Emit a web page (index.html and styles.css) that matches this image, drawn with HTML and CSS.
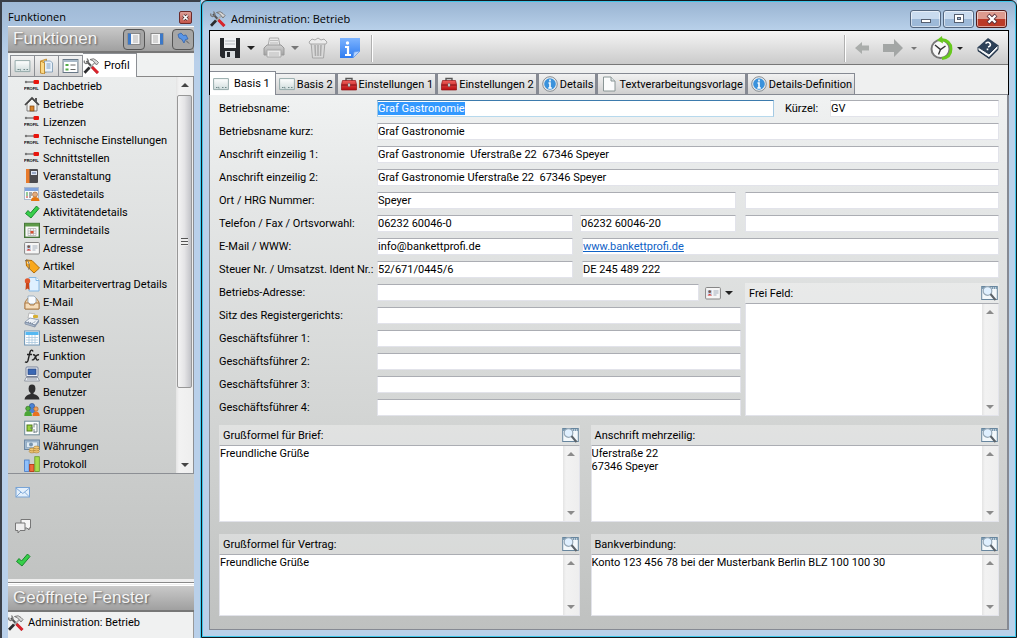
FILE: index.html
```html
<!DOCTYPE html>
<html lang="de">
<head>
<meta charset="utf-8">
<title>Administration: Betrieb</title>
<link rel="stylesheet" href="styles.css">
</head>
<body>
<svg class="defs" aria-hidden="true">
  <defs>
    <linearGradient id="gBlue" x1="0" y1="0" x2="0" y2="1"><stop offset="0" stop-color="#7db4ff"/><stop offset="1" stop-color="#2f7cf0"/></linearGradient>
    <linearGradient id="gRed" x1="0" y1="0" x2="0" y2="1"><stop offset="0" stop-color="#f0605c"/><stop offset="1" stop-color="#b80d10"/></linearGradient>
    <linearGradient id="gGray" x1="0" y1="0" x2="0" y2="1"><stop offset="0" stop-color="#d2d2d2"/><stop offset="1" stop-color="#a2a2a2"/></linearGradient>
    <linearGradient id="gSheet" x1="0" y1="0" x2="0" y2="1"><stop offset="0" stop-color="#ffffff"/><stop offset="1" stop-color="#cfdcdc"/></linearGradient>
  </defs>
  <symbol id="i-house" viewBox="0 0 16 16"><path d="M3 8v7h10V8L8 3z" fill="#f3f3f1" stroke="#666" stroke-width=".8"/><path d="M1 9l7-7 7 7" fill="none" stroke="#444" stroke-width="1.7"/><rect x="11" y="2" width="2" height="4" fill="#555"/><rect x="6" y="10" width="4" height="5" fill="#d9842b" stroke="#7c4510" stroke-width=".7"/></symbol>
  <symbol id="i-binder" viewBox="0 0 16 16"><rect x="2" y="1" width="12" height="14" rx="1" fill="#4b4b4f"/><rect x="2" y="1" width="3.500" height="14" fill="#e87b2c"/><rect x="7" y="3" width="6" height="4" fill="#dfe6f3"/><path d="M8 5h4" stroke="#56709e"/></symbol>
  <symbol id="i-guest" viewBox="0 0 16 16"><rect x=".5" y="1.500" width="14" height="12" fill="#f7f9fb" stroke="#a9b7cc"/><rect x="1" y="2" width="13" height="3" fill="#7fa3dd"/><path d="M2 7h2M2 9h2" stroke="#379a32"/><path d="M2 11h2" stroke="#d02d20"/><path d="M5 7h3M5 9h3M5 11h2" stroke="#555"/><circle cx="11" cy="8.500" r="2.500" fill="#e3ab7e" stroke="#9b5c2a" stroke-width=".6"/><path d="M7 15q0-4 4-4t4.500 4z" fill="#e57511"/></symbol>
  <symbol id="i-check" viewBox="0 0 16 16"><path d="M1.500 9.500l2.500-3 2.500 2.500L12.500 2l2.500 2.500L7 14z" fill="#37cf4a" stroke="#128024" stroke-width=".9"/></symbol>
  <symbol id="i-cal" viewBox="0 0 16 16"><rect x=".7" y="1.500" width="14.600" height="13.800" fill="#fafafa" stroke="#47763a" stroke-width="1.400"/><rect x="1" y="1.500" width="14" height="3" fill="#5e9a48"/><path d="M4 6.500h8v7H4zM4 9h8M4 11.300h8M6.600 6.500v7M9.400 6.500v7" fill="none" stroke="#b3b3b3" stroke-width=".8"/><rect x="6.500" y="9" width="3" height="2.500" fill="#d95030"/></symbol>
  <symbol id="i-card" viewBox="0 0 16 16"><rect x=".6" y="2.500" width="14.800" height="11.500" rx="1" fill="#f6f6f6" stroke="#868686"/><rect x="2.500" y="5" width="4.500" height="5.500" fill="#c7d4e8"/><circle cx="4.700" cy="6.700" r="1.400" fill="#75564b"/><path d="M2.500 10.500q2-3 4.500 0z" fill="#da2f24"/><path d="M8.500 6h5M8.500 8h5M8.500 10h3" stroke="#a4afbd"/></symbol>
  <symbol id="i-tag" viewBox="0 0 16 16"><path d="M2 2l6 .5 7.500 7.500-5.500 5L2.500 8z" fill="#f9a81c" stroke="#b26c08"/><circle cx="4.500" cy="4.800" r="1.200" fill="#fff"/><path d="M1 3q3-3 4 3t-1 5" fill="none" stroke="#666" stroke-width=".9"/></symbol>
  <symbol id="i-contract" viewBox="0 0 16 16"><path d="M5 1.500h7l3 3V15H5z" fill="#dff0ff" stroke="#83b7e4"/><path d="M12 1.500v3h3" fill="#fff" stroke="#83b7e4"/><circle cx="3.500" cy="5" r="2.700" fill="#e0572a"/><path d="M2 7l-.5 7 2-1.500L5.500 14 5 7z" fill="#c94519"/></symbol>
  <symbol id="i-mail" viewBox="0 0 16 16"><path d="M1 8l3-4h8l3 4v7H1z" fill="#eecb9d" stroke="#a97742" stroke-width=".9"/><path d="M4 2h6l2 2v6H4z" fill="#f8fbff" stroke="#8da5b9" stroke-width=".8"/><path d="M1 9h4l1 2h4l1-2h4v6H1z" fill="#f5dcba" stroke="#a97742" stroke-width=".9"/></symbol>
  <symbol id="i-till" viewBox="0 0 16 16"><path d="M5 1l6 1-1 5-6-1z" fill="#fff" stroke="#999" stroke-width=".6"/><path d="M1 10l5-4 9 2-4 5z" fill="#edf1f6" stroke="#8795a9" stroke-width=".8"/><path d="M1 10v2l10 3v-2z" fill="#aebdd0" stroke="#74839a" stroke-width=".7"/><path d="M11 13l4-5v2l-4 5z" fill="#8493aa"/><path d="M4 10l5 1.500 3-3" fill="none" stroke="#637690" stroke-width="1" stroke-dasharray="1 1"/><rect x="9" y="3" width="5" height="3" rx="1" fill="#d6ae32"/></symbol>
  <symbol id="i-table" viewBox="0 0 16 16"><rect x=".6" y="1" width="14.800" height="14" fill="#fff" stroke="#6e95b5"/><rect x="1.500" y="2" width="13" height="3" fill="#55b8f2"/><path d="M2 7.500h12M2 10h12M2 12.500h12M5 5v9M8 5v9M11 5v9" stroke="#aac8de" stroke-width=".8"/></symbol>
  <symbol id="i-fx" viewBox="0 0 16 16"><path d="M9 3.500C8.500 1.500 6.500 1.800 6 4L4 12.500Q3.300 15 1 13.800M3 6.500h5M9 7q2-.8 2.500 2l.8 2q.6 2 2.500.3M15 7q-2-.8-3.500 2l-1 1.500Q9 12.600 8 11.500" fill="none" stroke="#222" stroke-width="1.400"/></symbol>
  <symbol id="i-pc" viewBox="0 0 16 16"><rect x="2" y="1" width="12" height="9.500" rx="1" fill="#eef0f5" stroke="#79839a"/><rect x="4" y="3" width="8" height="5.500" fill="#3b68b4" stroke="#27447d" stroke-width=".7"/><path d="M2 11.500h12l1.500 3.500H.5z" fill="#eceff4" stroke="#848b98" stroke-width=".8"/><path d="M3 13h10" stroke="#969daa"/></symbol>
  <symbol id="i-user" viewBox="0 0 16 16"><ellipse cx="8" cy="4.700" rx="3.400" ry="4.200" fill="#2f2f30"/><path d="M6.500 7h3v3q5.500 1 6 5.500H.5Q1 11 6.500 10z" fill="#2f2f30"/></symbol>
  <symbol id="i-group" viewBox="0 0 16 16"><circle cx="8" cy="4" r="2.600" fill="#4b83d5" stroke="#2a4e8c" stroke-width=".6"/><path d="M4.500 11q0-4.500 3.500-4.500T11.500 11z" fill="#4b83d5"/><circle cx="4" cy="6.500" r="2.300" fill="#55b23d" stroke="#29641b" stroke-width=".6"/><path d="M.3 14q0-5 3.700-5t4 5z" fill="#4ba636"/><circle cx="12" cy="7" r="2.200" fill="#efa05d" stroke="#a65a20" stroke-width=".6"/><path d="M8.500 14q0-4.500 3.500-4.500t3.700 4.500z" fill="#e9711f"/></symbol>
  <symbol id="i-rooms" viewBox="0 0 16 16"><rect x=".7" y="1.200" width="14.600" height="13.600" fill="#fcfdfd" stroke="#6e8a98"/><rect x="3" y="5" width="5" height="6" fill="#9ad03c" stroke="#4f7a1c"/><path d="M10 3.500v4M10 9v4M10 4h3v8h-3M6 8h3" fill="none" stroke="#66777e" stroke-width=".9"/></symbol>
  <symbol id="i-money" viewBox="0 0 16 16"><rect x=".6" y="2" width="14.800" height="9.500" fill="#a8bfd4" stroke="#67829e"/><rect x="2.500" y="4" width="11" height="5.500" fill="#dfeaf3" stroke="#7e9ab4" stroke-width=".6"/><circle cx="7" cy="6.600" r="2" fill="#7794ae"/><g fill="#f2c97a" stroke="#a87a28" stroke-width=".6"><ellipse cx="8" cy="13.500" rx="2.800" ry="1.400"/><ellipse cx="8" cy="11.500" rx="2.800" ry="1.400"/><ellipse cx="12.500" cy="13.500" rx="2.800" ry="1.400"/><ellipse cx="12.500" cy="11.500" rx="2.800" ry="1.400"/><ellipse cx="12.500" cy="9.500" rx="2.800" ry="1.400"/></g></symbol>
  <symbol id="i-bars" viewBox="0 0 16 16"><rect x=".6" y="4" width="4.500" height="11.500" fill="#8fc0fb" stroke="#4579c4" stroke-width=".8"/><rect x="5.700" y="8.500" width="4.300" height="7" fill="#ee6a3c" stroke="#b03008" stroke-width=".8"/><rect x="10.800" y=".7" width="4.500" height="14.800" fill="#a6dd4c" stroke="#639621" stroke-width=".8"/></symbol>
  <symbol id="i-sheet" viewBox="0 0 16 16"><path d="M.6 2.600h14.800v11H.6z" fill="url(#gSheet)" stroke="#96aaab"/><path d="M3 11.500h1.500M5 11.500q1-1 1 1M9 11.500h1.500M12 11.500h1.500" stroke="#6f8788" fill="none"/></symbol>
  <symbol id="i-folder" viewBox="0 0 16 16"><path d="M2 3l6-2v13l-6 1z" fill="#f1bc51" stroke="#ba842a" stroke-width=".8"/><path d="M6 3h6l2 2v9H6z" fill="#e8f1fa" stroke="#7795b0" stroke-width=".8"/><path d="M8 6h4M8 8h4M8 10h4" stroke="#7d9fc1"/><path d="M2 3l4 2v11l-4-1z" fill="#fbd986" stroke="#ba842a" stroke-width=".8"/></symbol>
  <symbol id="i-options" viewBox="0 0 16 16"><rect x=".6" y="1.500" width="14.800" height="13" fill="#fff" stroke="#687887"/><path d="M1 3h14" stroke="#a9bac9" stroke-width="2"/><path d="M3 6h3v2H3zM3 10.500h3v2H3z" fill="#57ad49"/><path d="M8 7h5M8 11.500h5" stroke="#666"/></symbol>
  <symbol id="i-tools" viewBox="0 0 16 16"><path d="M3 3l11 12" stroke="#555" stroke-width="2"/><path d="M1 2.500Q0 5 2.500 5.500L4 5l1-2L3.500.5" fill="none" stroke="#777" stroke-width="1.300"/><path d="M8.500 9l6 6" stroke="#d9232b" stroke-width="3"/><path d="M12 4l-7 7" stroke="#aaa" stroke-width="1.600"/><path d="M6 9.500L1 14.700" stroke="#2b2b2e" stroke-width="2.700"/><path d="M6.500 1.500q4-2 6.500 1l2 2-2 2.500-2-2.500q-1-2-4.500-3z" fill="#d7d7d7" stroke="#666" stroke-width=".8"/></symbol>
  <symbol id="i-toolbox" viewBox="0 0 16 16"><path d="M5 5V2.500h6V5" fill="none" stroke="#555" stroke-width="1.400"/><path d="M1.500 4.500h13l1 4V14H.5V8.500z" fill="url(#gRed)" stroke="#8f1417" stroke-width=".7"/><path d="M.5 9h15" stroke="#7c0c10"/><path d="M7 7.500h2v3H7z" fill="#e9e9e9" stroke="#666" stroke-width=".5"/></symbol>
  <symbol id="i-info" viewBox="0 0 16 16"><circle cx="8" cy="8" r="7.300" fill="#eee" stroke="#858c92"/><circle cx="8" cy="8" r="5.800" fill="#3a92dc"/><path d="M8 3.500v2M6.500 7H8v5M6.300 12h3.500" stroke="#fff" stroke-width="1.600" fill="none"/></symbol>
  <symbol id="i-page" viewBox="0 0 16 16"><path d="M2.500 1h7.500l4 4v10h-11.500z" fill="#fbfcfc" stroke="#8a9696"/><path d="M10 1v4h4" fill="#dfe5e5" stroke="#8a9696"/></symbol>
  <symbol id="i-search" viewBox="0 0 17 16"><rect x=".7" y="1.500" width="15.600" height="13" fill="#f3f8fb" stroke="#68869e"/><path d="M1 3h15" stroke="#7c9bb2" stroke-width="2"/><path d="M10 3h1M12 3h1M14 3h1" stroke="#fff"/><circle cx="6.500" cy="6" r="4.300" fill="#e0f0ff" stroke="#97a9b8" stroke-width="1.200"/><path d="M9.500 9l5 6" stroke="#5b6268" stroke-width="2"/></symbol>
  <symbol id="i-envelope" viewBox="0 0 16 16"><rect x="1" y="3.500" width="13.500" height="9.500" fill="#e4f0fc" stroke="#78a4d6"/><path d="M1 4l6.800 5.500L14.500 4M1 13l5-5M14.500 13l-5-5" fill="none" stroke="#78a4d6" stroke-width=".9"/></symbol>
  <symbol id="i-chat" viewBox="0 0 16 16"><path d="M6 1.500h9.500V10H14v2l-2-2H6z" fill="#f6f6f6" stroke="#777"/><path d="M.5 5h9.500v7.500H5l-2 2.500v-2.500H.5z" fill="#eee" stroke="#777"/></symbol>
</svg>

<div class="desktop">
  <aside class="dock">
    <div class="dock-title">
      <span>Funktionen</span>
      <button class="dock-close" aria-label="Bereich schließen"><svg viewBox="0 0 13 13"><path d="M4 4l5 5M9 4l-5 5" stroke="#3a2020" stroke-width="3.400"/><path d="M4 4l5 5M9 4l-5 5" stroke="#fff" stroke-width="1.800"/></svg></button>
    </div>
    <div class="band">
      <h2>Funktionen</h2>
      <div class="band-buttons">
        <button class="mini pressed" aria-label="Links andocken"><svg viewBox="0 0 16 16"><rect x="2" y="2.500" width="12" height="11" fill="#f5f5f5" stroke="#777" stroke-width=".8"/><rect x="2" y="2.500" width="3" height="11" fill="#3b78c8"/><path d="M7 5h5M7 7h5M7 9h5M7 11h5" stroke="#999" stroke-width=".7"/></svg></button>
        <button class="mini" aria-label="Rechts andocken"><svg viewBox="0 0 16 16"><rect x="2" y="2.500" width="12" height="11" fill="#f5f5f5" stroke="#777" stroke-width=".8"/><rect x="11" y="2.500" width="3" height="11" fill="#3b78c8"/><path d="M4 5h5M4 7h5M4 9h5M4 11h5" stroke="#999" stroke-width=".7"/></svg></button>
        <button class="mini pressed" aria-label="Anheften"><svg viewBox="0 0 16 16"><path d="M3 3.500l3-1.500 2.500 2.500 2.500-.5 2 4-2.500.5-1.500 3.500L6.500 8 4 7z" fill="#5a95e6" stroke="#2b5ca8" stroke-width=".7"/><path d="M11 9.500l3 3" stroke="#555"/></svg></button>
      </div>
    </div>
    <div class="dock-tabs" role="tablist">
      <button role="tab" aria-label="Übersicht"><svg class="ic wide"><use href="#i-sheet"/></svg></button>
      <button role="tab" aria-label="Ordner"><svg class="ic wide"><use href="#i-folder"/></svg></button>
      <button role="tab" aria-label="Optionen"><svg class="ic wide"><use href="#i-options"/></svg></button>
      <button role="tab" class="active" aria-selected="true"><svg class="ic wide"><use href="#i-tools"/></svg>Profil</button>
    </div>
    <div class="tree">
      <ul>
        <li><svg class="ic" viewBox="0 0 16 16"><path d="M1 4h10" stroke="#777" stroke-width="1.4"/><circle cx="2" cy="4" r="1.2" fill="#777"/><rect x="9.5" y="2" width="5.5" height="4" rx="1" fill="#e8150c"/><text class="logo-text" x="0" y="12">PROFIL</text></svg>Dachbetrieb</li>
        <li><svg class="ic"><use href="#i-house"/></svg>Betriebe</li>
        <li><svg class="ic" viewBox="0 0 16 16"><path d="M1 4h10" stroke="#777" stroke-width="1.4"/><circle cx="2" cy="4" r="1.2" fill="#777"/><rect x="9.5" y="2" width="5.5" height="4" rx="1" fill="#e8150c"/><text class="logo-text" x="0" y="12">PROFIL</text></svg>Lizenzen</li>
        <li><svg class="ic" viewBox="0 0 16 16"><path d="M1 4h10" stroke="#777" stroke-width="1.4"/><circle cx="2" cy="4" r="1.2" fill="#777"/><rect x="9.5" y="2" width="5.5" height="4" rx="1" fill="#e8150c"/><text class="logo-text" x="0" y="12">PROFIL</text></svg>Technische Einstellungen</li>
        <li><svg class="ic" viewBox="0 0 16 16"><path d="M1 4h10" stroke="#777" stroke-width="1.4"/><circle cx="2" cy="4" r="1.2" fill="#777"/><rect x="9.5" y="2" width="5.5" height="4" rx="1" fill="#e8150c"/><text class="logo-text" x="0" y="12">PROFIL</text></svg>Schnittstellen</li>
        <li><svg class="ic"><use href="#i-binder"/></svg>Veranstaltung</li>
        <li><svg class="ic"><use href="#i-guest"/></svg>Gästedetails</li>
        <li><svg class="ic"><use href="#i-check"/></svg>Aktivitätendetails</li>
        <li><svg class="ic"><use href="#i-cal"/></svg>Termindetails</li>
        <li><svg class="ic"><use href="#i-card"/></svg>Adresse</li>
        <li><svg class="ic"><use href="#i-tag"/></svg>Artikel</li>
        <li><svg class="ic"><use href="#i-contract"/></svg>Mitarbeitervertrag Details</li>
        <li><svg class="ic"><use href="#i-mail"/></svg>E-Mail</li>
        <li><svg class="ic"><use href="#i-till"/></svg>Kassen</li>
        <li><svg class="ic"><use href="#i-table"/></svg>Listenwesen</li>
        <li><svg class="ic"><use href="#i-fx"/></svg>Funktion</li>
        <li><svg class="ic"><use href="#i-pc"/></svg>Computer</li>
        <li><svg class="ic"><use href="#i-user"/></svg>Benutzer</li>
        <li><svg class="ic"><use href="#i-group"/></svg>Gruppen</li>
        <li><svg class="ic"><use href="#i-rooms"/></svg>Räume</li>
        <li><svg class="ic"><use href="#i-money"/></svg>Währungen</li>
        <li><svg class="ic"><use href="#i-bars"/></svg>Protokoll</li>
      </ul>
      <div class="scroll dark"><i class="up"></i><div class="thumb"><b></b></div><i class="down"></i></div>
    </div>
    <div class="quick">
      <button aria-label="Nachrichten"><svg class="ic"><use href="#i-envelope"/></svg></button>
      <button aria-label="Chat"><svg class="ic"><use href="#i-chat"/></svg></button>
      <button aria-label="Aufgaben"><svg class="ic"><use href="#i-check"/></svg></button>
    </div>
    <div class="splitter"></div>
    <div class="band low"><h2>Geöffnete Fenster</h2></div>
    <div class="open-list"><div><svg class="ic"><use href="#i-tools"/></svg>Administration: Betrieb</div></div>
  </aside>

  <main class="window">
    <header class="caption">
      <svg class="ic"><use href="#i-tools"/></svg>
      <h1>Administration: Betrieb</h1>
      <div class="caption-buttons">
        <button aria-label="Minimieren"><svg viewBox="0 0 16 12"><rect x="3.500" y="6.500" width="9" height="3" fill="#fff" stroke="#555f70"/></svg></button>
        <button aria-label="Maximieren"><svg viewBox="0 0 16 12"><rect x="3.500" y="1.500" width="9" height="8" fill="#fff" stroke="#555f70"/><rect x="6.500" y="4.500" width="3" height="2" fill="#9fb8d6" stroke="#555f70"/></svg></button>
        <button class="close" aria-label="Schließen"><svg viewBox="0 0 16 12"><path d="M4 2l8 8M12 2l-8 8" stroke="#59303a" stroke-width="4"/><path d="M4.500 2.500l7 7M11.500 2.500l-7 7" stroke="#fff" stroke-width="2.400"/></svg></button>
      </div>
    </header>
    <div class="client">
      <div class="toolbar">
        <button aria-label="Speichern"><svg class="tb" viewBox="0 0 22 22"><path d="M1 1h20v20H3l-2-2z" fill="#26292d"/><rect x="5" y="1" width="12" height="10" fill="#f0f2f4"/><path d="M6 4h10M6 7h10" stroke="#b7bcc2"/><rect x="6" y="14" width="10" height="7" fill="#d8dcdf"/><rect x="8" y="15" width="3" height="5" fill="#25282c"/></svg></button>
        <button class="drop" aria-label="Speichern, weitere"><i class="caret"></i></button>
        <button aria-label="Drucken"><svg class="tb" viewBox="0 0 22 22"><path d="M5 9L6.500 1h9L17 9z" fill="#e8e8e8" stroke="#aaa"/><path d="M1 11l3-3h14l3 3v7H1z" fill="url(#gGray)" stroke="#999"/><path d="M4 13h14v7H4z" fill="#e9e9e9" stroke="#a9a9a9"/><path d="M7 3.500h8M7 6h8M6 16h10M6 18h10" stroke="#bbb"/></svg></button>
        <button class="drop" aria-label="Drucken, weitere"><i class="caret dim"></i></button>
        <button aria-label="Löschen"><svg class="tb" viewBox="0 0 22 22"><path d="M4 5h14l-1.500 16h-11z" fill="#d9d9d9" stroke="#a6a6a6"/><path d="M8 8l.5 11M11 8v11M14 8l-.5 11" stroke="#aaa" stroke-width="1.500"/><path d="M2 5l3-3 3 1 3-2 3 2 3-1 3 3-1 2H3z" fill="#ececec" stroke="#aaa"/></svg></button>
        <button class="note-btn" aria-label="Information"><svg class="tb" viewBox="0 0 22 22"><path d="M1 1h20v13l-7 7H1z" fill="url(#gBlue)"/><path d="M14 21l1-6 6-1z" fill="#b9d5ff" stroke="#5e96ea" stroke-width=".7"/><circle cx="8.500" cy="6" r="1.700" fill="#fff"/><path d="M6 10h3v8M6 18h6" stroke="#fff" stroke-width="2.200" fill="none"/></svg></button>
        <span class="sep"></span>
        <span class="grow"></span>
        <span class="sep"></span>
        <button class="nav" aria-label="Zurück"><svg viewBox="0 0 20 18"><path d="M3 9l7-6v3.500h7v5h-7V15z" fill="#aaadab"/></svg></button>
        <button class="nav wide-nav" aria-label="Vor"><svg viewBox="0 0 22 20"><path d="M21 10l-9-9v5H1v8h11v5z" fill="#a3a6a5"/></svg></button>
        <button class="drop" aria-label="Verlauf vor"><i class="caret dim small"></i></button>
        <button class="schedule" aria-label="Zeitplan"><svg class="clock" viewBox="0 0 24 24"><circle cx="11.500" cy="13" r="9" fill="#f8f8f8" stroke="#777" stroke-width="2"/><path d="M6 9l5.500 4.500 5-3.500M11.500 13.500l-2 5" stroke="#333" stroke-width="1.400" fill="none"/><path d="M12 3.500q10 1 10 9.500t-9 9.500" fill="none" stroke="#67c91d" stroke-width="2.800"/><path d="M13 0L8 4l6 3.500z" fill="#67c91d"/></svg></button>
        <button class="drop narrow" aria-label="Zeitplan, weitere"><i class="caret small"></i></button>
        <button class="help" aria-label="Hilfe"><svg class="tb" viewBox="0 0 22 22"><path d="M11 1l10 7-9 9L1 10z" fill="#2d4158"/><path d="M1 10v3.500L12 21l9-9V8l-9 9z" fill="#f3f5f7" stroke="#26384d"/><path d="M1 13.500L12 21l9-9" fill="none" stroke="#26384d" stroke-width="1.500"/><path d="M8.500 6.500q3-2.500 4.500 0t-2 3.500M10.500 11.500v1.800" stroke="#fff" stroke-width="1.600" fill="none"/></svg></button>
      </div>
      <div class="tabs" role="tablist">
        <button role="tab" class="active" aria-selected="true"><svg class="ic"><use href="#i-sheet"/></svg>Basis 1</button>
        <button role="tab"><svg class="ic"><use href="#i-sheet"/></svg>Basis 2</button>
        <button role="tab"><svg class="ic"><use href="#i-toolbox"/></svg>Einstellungen 1</button>
        <button role="tab"><svg class="ic"><use href="#i-toolbox"/></svg>Einstellungen 2</button>
        <button role="tab"><svg class="ic"><use href="#i-info"/></svg>Details</button>
        <button role="tab"><svg class="ic"><use href="#i-page"/></svg>Textverarbeitungsvorlage</button>
        <button role="tab"><svg class="ic"><use href="#i-info"/></svg>Details-Definition</button>
      </div>
      <form class="panel">
        <div class="row"><label for="name">Betriebsname:</label>
          <div class="cols name-cols"><div class="field focus"><input id="name" value="Graf Gastronomie"></div><label for="kz">Kürzel:</label><div class="field"><input id="kz" value="GV"></div></div></div>
        <div class="row"><label for="kurz">Betriebsname kurz:</label><div class="field"><input id="kurz" value="Graf Gastronomie"></div></div>
        <div class="row"><label for="a1">Anschrift einzeilig 1:</label><div class="field"><input id="a1" value="Graf Gastronomie  Uferstraße 22  67346 Speyer"></div></div>
        <div class="row"><label for="a2">Anschrift einzeilig 2:</label><div class="field"><input id="a2" value="Graf Gastronomie Uferstraße 22  67346 Speyer"></div></div>
        <div class="row"><label for="ort">Ort / HRG Nummer:</label>
          <div class="cols two"><div class="field"><input id="ort" value="Speyer"></div><div class="field"><input aria-label="HRG Nummer"></div></div></div>
        <div class="row"><label for="tel">Telefon / Fax / Ortsvorwahl:</label>
          <div class="cols two"><div class="cols phone"><div class="field"><input id="tel" value="06232 60046-0"></div><div class="field"><input aria-label="Fax" value="06232 60046-20"></div></div><div class="field"><input aria-label="Ortsvorwahl"></div></div></div>
        <div class="row"><label for="mail">E-Mail / WWW:</label>
          <div class="cols web"><div class="field"><input id="mail" value="info@bankettprofi.de"></div><div class="field"><a href="#www">www.bankettprofi.de</a></div></div></div>
        <div class="row"><label for="st">Steuer Nr. / Umsatzst. Ident Nr.:</label>
          <div class="cols web"><div class="field"><input id="st" value="52/671/0445/6"></div><div class="field"><input aria-label="Umsatzsteuer Ident Nr." value="DE 245 489 222"></div></div></div>

        <div class="middle">
          <div class="stack">
            <div class="row"><label for="adr">Betriebs-Adresse:</label><div class="picker"><div class="field"><input id="adr"></div><button type="button" aria-label="Adresse wählen"><svg class="ic"><use href="#i-card"/></svg><i class="caret"></i></button></div></div>
            <div class="row"><label for="sitz">Sitz des Registergerichts:</label><div class="field"><input id="sitz"></div></div>
            <div class="row"><label for="g1">Geschäftsführer 1:</label><div class="field"><input id="g1"></div></div>
            <div class="row"><label for="g2">Geschäftsführer 2:</label><div class="field"><input id="g2"></div></div>
            <div class="row"><label for="g3">Geschäftsführer 3:</label><div class="field"><input id="g3"></div></div>
            <div class="row"><label for="g4">Geschäftsführer 4:</label><div class="field"><input id="g4"></div></div>
          </div>
          <div class="memo free">
            <div class="memo-head"><label for="frei">Frei Feld:</label><button type="button" aria-label="Frei Feld öffnen"><svg><use href="#i-search"/></svg></button></div>
            <div class="memo-body"><textarea id="frei"></textarea><div class="scroll"><i class="up"></i><i class="down"></i></div></div>
          </div>
        </div>

        <div class="memos">
          <div class="memo tall">
            <div class="memo-head"><label for="m1">Grußformel für Brief:</label><button type="button" aria-label="Grußformel Brief öffnen"><svg><use href="#i-search"/></svg></button></div>
            <div class="memo-body"><textarea id="m1">Freundliche Grüße</textarea><div class="scroll"><i class="up"></i><i class="down"></i></div></div>
          </div>
          <div class="memo tall">
            <div class="memo-head"><label for="m2">Anschrift mehrzeilig:</label><button type="button" aria-label="Anschrift öffnen"><svg><use href="#i-search"/></svg></button></div>
            <div class="memo-body"><textarea id="m2">Uferstraße 22
67346 Speyer</textarea><div class="scroll"><i class="up"></i><i class="down"></i></div></div>
          </div>
          <div class="memo">
            <div class="memo-head"><label for="m3">Grußformel für Vertrag:</label><button type="button" aria-label="Grußformel Vertrag öffnen"><svg><use href="#i-search"/></svg></button></div>
            <div class="memo-body"><textarea id="m3">Freundliche Grüße</textarea><div class="scroll"><i class="up"></i><i class="down"></i></div></div>
          </div>
          <div class="memo">
            <div class="memo-head"><label for="m4">Bankverbindung:</label><button type="button" aria-label="Bankverbindung öffnen"><svg><use href="#i-search"/></svg></button></div>
            <div class="memo-body"><textarea id="m4">Konto 123 456 78 bei der Musterbank Berlin BLZ 100 100 30</textarea><div class="scroll"><i class="up"></i><i class="down"></i></div></div>
          </div>
        </div>
      </form>
    </div>
  </main>
</div>
<script src="main.js"></script>
</body>
</html>
```

FILE: main.js
```js
// The first field starts with its whole value selected.
const first = document.getElementById("name");
first.focus();
first.select();
```

FILE: styles.css
```css
* { box-sizing: border-box; }

body {
  margin: 0;
  background: #b9d1ea;
  color: #000;
  font: 11px/13px Roboto, "Liberation Sans", Arial, sans-serif;
}

button, input, textarea {
  margin: 0;
  padding: 0;
  border: 0;
  background: none;
  color: inherit;
  font: inherit;
}

h1, h2, ul { margin: 0; padding: 0; font-weight: normal; }
ul { list-style: none; }
svg { display: block; flex: none; }
.defs { position: absolute; width: 0; height: 0; }
.ic { width: 16px; height: 16px; }
.logo-text { font: bold 4px "Liberation Sans", Arial, sans-serif; fill: #000; }
::selection { background: #3399ff; color: #fff; }

.desktop { display: flex; height: 100vh; overflow: hidden; }

/* Left dock */
.dock {
  display: flex;
  flex-direction: column;
  flex: none;
  width: 201px;
  padding: 0 6px;
  border: solid #3a3f48;
  border-width: 2px 0 0 2px;
  border-right: 1px solid #45cdf2;
  background: linear-gradient(#9fb9d6, #b9d0ea 60px);
}

.dock-title {
  display: flex;
  align-items: center;
  justify-content: space-between;
  flex: none;
  height: 24px;
  padding: 6px 2px 0 0;
  font: 11px/16px "Open Sans", sans-serif;
}
.dock-close {
  width: 13px;
  height: 13px;
  border: 1px solid #6b2a2a;
  border-radius: 2px;
  background: linear-gradient(#dba099, #c4554a);
}

.band {
  display: flex;
  align-items: center;
  justify-content: space-between;
  flex: none;
  height: 27px;
  padding-left: 5px;
  border-top: 1px solid #fff;
  border-bottom: 2px solid #777;
  background: linear-gradient(#c9c9c9, #a0a0a0);
}
.band h2 {
  color: #f4f4f4;
  font: 17px/22px "Liberation Sans", Arial, sans-serif;
  text-shadow: 1px 1px 2px #555;
}
.band-buttons { display: flex; gap: 1px; }
.mini {
  display: grid;
  place-items: center;
  width: 22px;
  height: 21px;
  border: 1px solid transparent;
  border-radius: 4px;
}
.mini svg { width: 16px; height: 16px; }
.mini.pressed { border-color: #555; background: #a6a6a6; }
.mini:last-child { margin-left: 3px; }

.dock-tabs {
  display: flex;
  align-items: flex-end;
  flex: none;
  height: 24px;
  padding-left: 2px;
  border-top: 1px solid #eee;
  background: linear-gradient(to top, #888 1px, #f0f2f2 1px);
}
.dock-tabs button {
  display: flex;
  align-items: center;
  gap: 4px;
  height: 22px;
  padding: 0 3px;
  border: 1px solid #8c8f94;
  border-left-width: 0;
  background: linear-gradient(#f2f2f2, #d4d4d4);
}
.dock-tabs button:first-child { border-left-width: 1px; }
.dock-tabs .wide { width: 17px; }
.dock-tabs .active {
  height: 24px;
  padding: 0 6px 0 0;
  border-bottom: 0;
  background: #fff;
}

.tree {
  display: flex;
  flex: none;
  border-right: 1px solid #8c8f94;
  border-bottom: 1px solid #8c8f94;
  background: linear-gradient(#ebeded, #cbcdcc);
}
.tree ul { flex: 1; padding-left: 16px; }
.tree li {
  display: flex;
  align-items: center;
  gap: 3px;
  height: 18px;
  white-space: nowrap;
}

.scroll {
  display: flex;
  flex-direction: column;
  align-items: center;
  justify-content: space-between;
  flex: none;
  width: 16px;
  padding: 6px 0;
  background: linear-gradient(to right, #e4e4e4, #f2f2f2 3px, #eee);
}
.scroll i { border: solid transparent; border-width: 0 4px; }
.scroll .up { border-bottom: 4px solid #8b8b8b; }
.scroll .down { border-top: 4px solid #8b8b8b; }
.scroll.dark { width: 17px; }
.scroll.dark .up { border-bottom-color: #444; }
.scroll.dark .down { border-top-color: #444; }
.thumb {
  display: grid;
  place-items: center;
  width: 15px;
  height: 293px;
  margin: 8px 0 auto;
  border: 1px solid #979797;
  border-radius: 2px;
  background: linear-gradient(to right, #f4f4f4, #e4e4e6 50%, #c2c3c8);
}
.thumb b {
  width: 7px;
  height: 8px;
  background: repeating-linear-gradient(#555 0 1px, #eee 1px 3px);
}

.quick {
  display: flex;
  flex-direction: column;
  gap: 18px;
  flex: none;
  height: 105px;
  padding: 10px 7px;
  background: linear-gradient(#cacccb, #c1c3c2);
}
.quick button { width: 16px; height: 16px; }
.splitter {
  flex: none;
  height: 6px;
  border: solid #eee;
  border-width: 3px 0 1px;
  background: #888;
  box-shadow: inset 0 -1px #fff;
}
.band.low { height: 27px; }
.open-list {
  flex: 1;
  border-right: 1px solid #999;
  background: #f0f1f1;
}
.open-list div { display: flex; align-items: center; gap: 4px; height: 21px; }

/* Main window */
.window {
  display: flex;
  flex-direction: column;
  flex: 1;
  min-width: 0;
  padding: 2px 7px 7px;
  border: 1px solid #14181c;
  border-radius: 6px 6px 0 0;
  background: linear-gradient(#98b3d1, #b9d1ea 30px);
  box-shadow: inset 0 0 0 1px #3fc6ea;
}
.caption {
  display: flex;
  align-items: center;
  gap: 5px;
  flex: none;
  height: 27px;
  padding: 4px 2px 0 1px;
}
.caption h1 { flex: 1; font: 11px/16px "Open Sans", sans-serif; }
.caption-buttons { display: flex; gap: 2px; }
.caption-buttons button {
  display: grid;
  place-items: center;
  width: 31px;
  height: 18px;
  border: 1px solid #53667f;
  border-radius: 3px;
  background: linear-gradient(#c9dbef 50%, #9db9d8 50%);
  box-shadow: inset 0 0 0 1px #ffffff88;
}
.caption-buttons svg { width: 16px; height: 12px; }
.caption-buttons .close {
  border-color: #4f1b1b;
  background: linear-gradient(#dd9b8f 50%, #bb3a28 50%);
}

.client {
  display: flex;
  flex-direction: column;
  flex: 1;
  background: #eff0f0;
}
.toolbar {
  display: flex;
  align-items: center;
  flex: none;
  height: 35px;
  padding: 0 9px;
  border: solid #000;
  border-width: 1px 1px 0;
  background: linear-gradient(#f5f5f5, #c9c9c9);
  box-shadow: inset 0 -1px #777;
}
.tb { width: 22px; height: 22px; }
.drop { display: grid; place-items: center; width: 19px; height: 22px; }
.drop.narrow { width: 14px; }
.drop + button { margin-left: 3px; }
.toolbar .note-btn { margin-left: 10px; }
.caret { border: solid transparent; border-width: 4px 4px 0; border-top-color: #222; }
.caret.dim { border-top-color: #777; }
.caret.small { border-width: 3px 3px 0; }
.sep { width: 2px; height: 27px; margin-left: 10px; border-left: 1px solid #b0b0b0; background: #fff; }
.grow { flex: 1; }
.nav { margin-left: 6px; }
.nav svg { width: 20px; height: 18px; }
.toolbar .wide-nav { margin-left: 10px; }
.wide-nav svg { width: 22px; height: 20px; }
.clock { width: 24px; height: 24px; }
.toolbar .schedule { margin-left: 6px; }
.toolbar .help { margin-left: 10px; }

.tabs {
  display: flex;
  align-items: flex-end;
  flex: none;
  height: 30px;
  border: solid #000;
  border-width: 0 1px;
  background: linear-gradient(to top, #888b92 1px, #eff0f0 1px);
}
.tabs button {
  display: flex;
  align-items: center;
  gap: 2px;
  height: 22px;
  padding: 0 2px 0 3px;
  border: 1px solid #868a93;
  border-left-width: 2px;
  background: linear-gradient(#f2f2f2, #cfcfcf);
  white-space: nowrap;
}
.tabs .active {
  gap: 5px;
  height: 24px;
  padding-right: 5px;
  border-left-width: 0;
  border-bottom: 0;
  background: #fff;
}
.tabs button:nth-child(2) { border-left-width: 0; }

.panel {
  flex: 1;
  padding: 2px 8px 12px 9px;
  border: solid #868a93;
  border-width: 0 2px 1px 1px;
  background: linear-gradient(#f0f2f2, #e6e8e8 90px, #d3d5d4 320px, #bfc1c0);
}
.row {
  display: grid;
  grid-template-columns: 158px minmax(0, 1fr);
  align-items: center;
  height: 23px;
  white-space: nowrap;
}
.field {
  display: flex;
  min-width: 0;
  height: 17px;
  border: 1px solid #e2e3ea;
  border-top-color: #abadb3;
  background: #fff;
}
.field.focus { border-color: #3d7bad #a4c9e3 #b7d9ed #a4c9e3; }
.field input { width: 100%; height: 14px; outline: 0; }
.field a { color: #0f62c6; line-height: 15px; text-decoration: underline; }
.cols { display: grid; align-items: center; min-width: 0; }
.name-cols { grid-template-columns: minmax(0, 397fr) 34px minmax(0, 169fr); gap: 11px; }
.two { grid-template-columns: minmax(0, 359fr) minmax(0, 254fr); gap: 9px; }
.phone { grid-template-columns: minmax(0, 196fr) minmax(0, 156fr); gap: 7px; }
.web { grid-template-columns: minmax(0, 196fr) minmax(0, 417fr); gap: 9px; }

.middle {
  display: grid;
  grid-template-columns: minmax(0, 522fr) minmax(0, 254fr);
  gap: 4px;
}
.picker { display: grid; grid-template-columns: minmax(0, 1fr) 36px; gap: 6px; align-items: center; }
.picker button { display: flex; align-items: center; gap: 4px; }

.memo { display: flex; flex-direction: column; min-width: 0; }
.memo.free { padding: 2px 0 3px; }
.memo-head {
  display: flex;
  align-items: center;
  justify-content: space-between;
  height: 20px;
  padding: 0 1px 0 4px;
  background: #ffffff55;
}
.memo-head svg { width: 17px; height: 16px; }
.memo-body {
  display: flex;
  flex: 1;
  min-height: 62px;
  border: 1px solid #e2e3ea;
  border-top-color: #abadb3;
  background: #fff;
}
.memo.tall .memo-body { min-height: 77px; }
.memo textarea { flex: 1; min-width: 0; height: auto; padding: 1px 0; resize: none; outline: 0; overflow: hidden; }
.memos {
  display: grid;
  grid-template-columns: minmax(0, 361fr) minmax(0, 409fr);
  gap: 12px 11px;
  padding-top: 6px;
}
```
